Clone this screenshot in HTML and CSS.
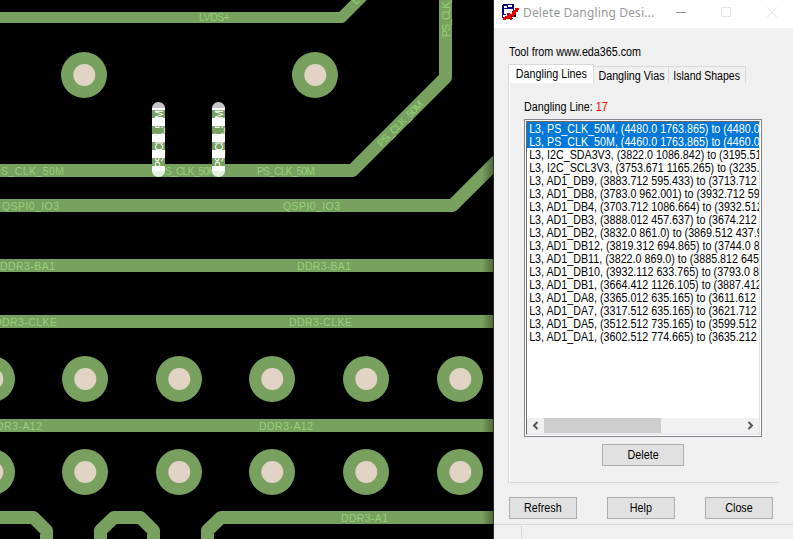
FILE: index.html
```html
<!DOCTYPE html>
<html lang="en">
<head>
<meta charset="utf-8">
<title>Delete Dangling Design</title>
<link rel="stylesheet" href="styles.css">
</head>
<body>
<main class="workspace">
<svg class="board" width="494" height="539" viewBox="0 0 494 539">
  <defs>
    <linearGradient id="shade"><stop offset="0" stop-color="#000" stop-opacity="0"/><stop offset="1" stop-color="#000" stop-opacity=".38"/></linearGradient>
    <g id="via"><circle r="23" fill="#78a15f"/><circle cx=".3" r="11" fill="#e1d4c5"/></g>
    <g id="dangling">
      <path d="M152 171V108h13v63z" fill="#fff"/>
      <path d="M152 108c0-3 3-6 6.500-6s6.500 3 6.500 6z" fill="#c8c6c8"/>
      <path d="M152 110h13v8h-13zM152 126h13v8h-13zM152 142h13v8h-13zM152 158h13v8h-13z" fill="#78a15f"/>
      <path d="M152 171h13c0 3-3 6-6.500 6s-6.500-3-6.500-6z" fill="#e4f0df"/>
      <text class="net lit" transform="translate(162.500 168) rotate(-90)" textLength="58">PS_CLK_50M</text>
    </g>
  </defs>
  <rect width="494" height="539"/>
  <g class="trace">
    <path class="thin" d="M-10 17.500H341.500L365 -6"/>
    <path d="M-10 170.500H352.500L445.500 77.500V-10"/>
    <path d="M-10 205.500H452.500L510 148"/>
    <path d="M-10 265.500H510M-10 321.500H510M-10 425.500H510"/>
    <path d="M-10 517.500H33.500L46.500 530.500V550M100.500 550V530.500L114 517.500H140.500L153.500 530.500V550M207.500 550V530.500L221 517.500H510"/>
  </g>
  <use href="#via" x="84" y="75"/><use href="#via" x="315" y="75"/>
  <use href="#via" x="-8" y="379"/><use href="#via" x="85" y="379"/><use href="#via" x="179" y="379"/><use href="#via" x="272" y="379"/><use href="#via" x="366" y="379"/><use href="#via" x="460" y="379"/>
  <use href="#via" x="-8" y="472"/><use href="#via" x="85" y="472"/><use href="#via" x="179" y="472"/><use href="#via" x="272" y="472"/><use href="#via" x="366" y="472"/><use href="#via" x="460" y="472"/>
  <text class="net" x="199" y="21" textLength="31">LVDS+</text>
  <text class="net" transform="translate(356 5) rotate(-45)">LVDS+</text>
  <text class="net" x="1" y="174.500" textLength="63">S_CLK_50M</text>
  <text class="net" x="165" y="174.500" textLength="52">S_CLK_50M</text>
  <text class="net" x="257" y="174.500" textLength="58">PS_CLK_50M</text>
  <text class="net" transform="translate(381.500 147.500) rotate(-45)" textLength="60">PS_CLK_50M</text>
  <text class="net" transform="translate(449.500 37) rotate(-90)" textLength="58">PS_CLK_50M</text>
  <text class="net" x="2" y="209.500" textLength="57">QSPI0_IO3</text>
  <text class="net" x="283" y="209.500" textLength="57">QSPI0_IO3</text>
  <text class="net" x="0" y="269.500" textLength="55">DDR3-BA1</text>
  <text class="net" x="297" y="269.500" textLength="54">DDR3-BA1</text>
  <text class="net" x="-6" y="325.500" textLength="63">DDR3-CLKE</text>
  <text class="net" x="289" y="325.500" textLength="63">DDR3-CLKE</text>
  <text class="net" x="-12" y="429.500" textLength="54">DDR3-A12</text>
  <text class="net" x="259" y="429.500" textLength="54">DDR3-A12</text>
  <text class="net" x="341" y="521.500" textLength="47">DDR3-A1</text>
  <use href="#dangling"/><use href="#dangling" x="60"/>
  <rect x="482" width="12" height="539" fill="url(#shade)"/>
  <rect x="493" width="1" height="539" fill="#302d30" opacity=".8"/>
</svg>

<section class="dialog">
  <header class="titlebar">
    <svg class="app-icon" width="17" height="17" viewBox="0 0 17 17" shape-rendering="crispEdges">
      <path fill="#000080" d="M1 0h11v9h-2V5H5v6H1v3H0V1h1z"/>
      <path fill="#fff" d="M2 2h3v2H2zM6 1h4v2H6zM2 5h9v6H2z"/>
      <path fill="#000" d="M2 15h2v1H2zM6 14h5v1H6zM12 11h2v2h-2zM10 7h1v2h-1z"/>
      <path fill="#000080" d="M11 1h1v5h-1zM1 4h5v1H1zM1 10h3v1H1z"/>
      <path fill="#e80000" d="M13 4h4v2h-1v2h-2v3h-2v2h-2v3H8v-2H7v1H4v1H1v-3h2v-1h2V9h3v1h2V8h1V6h2z"/>
    </svg>
    <h1 class="title">Delete Dangling Desi...</h1>
    <svg class="window-controls" width="112" height="28" viewBox="0 0 112 28" fill="none" shape-rendering="crispEdges">
      <path d="M1 12.500H11" stroke="#929292"/>
      <path d="M46.500 7.500h9v9h-9z" stroke="#e5e5e5"/>
      <path d="M92 7.500l10 10M102 7.500l-10 10" stroke="#e2e2e2" shape-rendering="auto"/>
    </svg>
  </header>
  <p class="credit"><span class="label">Tool from www.eda365.com</span></p>
  <nav class="tabs"><div class="tab active"><span class="label">Dangling Lines</span></div><div class="tab vias"><span class="label">Dangling Vias</span></div><div class="tab shapes"><span class="label">Island Shapes</span></div></nav>
  <div class="panel">
    <p class="count"><span class="label">Dangling Line: <span class="number">17</span></span></p>
    <div class="listbox"><div class="list-inner">
      <ul class="rows">
        <li class="selected">L3, PS_CLK_50M, (4480.0 1763.865) to (4480.0</li>
        <li class="selected">L3, PS_CLK_50M, (4460.0 1763.865) to (4460.0</li>
        <li>L3, I2C_SDA3V3, (3822.0 1086.842) to (3195.51</li>
        <li>L3, I2C_SCL3V3, (3753.671 1165.265) to (3235.</li>
        <li>L3, AD1_DB9, (3883.712 595.433) to (3713.712</li>
        <li>L3, AD1_DB8, (3783.0 962.001) to (3932.712 59</li>
        <li>L3, AD1_DB4, (3703.712 1086.664) to (3932.512</li>
        <li>L3, AD1_DB3, (3888.012 457.637) to (3674.212</li>
        <li>L3, AD1_DB2, (3832.0 861.0) to (3869.512 437.9</li>
        <li>L3, AD1_DB12, (3819.312 694.865) to (3744.0 8</li>
        <li>L3, AD1_DB11, (3822.0 869.0) to (3885.812 645</li>
        <li>L3, AD1_DB10, (3932.112 633.765) to (3793.0 8</li>
        <li>L3, AD1_DB1, (3664.412 1126.105) to (3887.412</li>
        <li>L3, AD1_DA8, (3365.012 635.165) to (3611.612</li>
        <li>L3, AD1_DA7, (3317.512 635.165) to (3621.712</li>
        <li>L3, AD1_DA5, (3512.512 735.165) to (3599.512</li>
        <li>L3, AD1_DA1, (3602.512 774.665) to (3635.212</li>
      </ul>
      <div class="scrollbar">
        <svg width="17" height="15" viewBox="0 0 17 15"><path d="M10.500 4L7 7.500l3.500 3.500" fill="none" stroke="#555" stroke-width="2"/></svg>
        <div class="thumb"></div>
        <svg width="17" height="15" viewBox="0 0 17 15"><path d="M6.500 4L10 7.500 6.500 11" fill="none" stroke="#555" stroke-width="2"/></svg>
      </div>
    </div></div>
    <button class="button delete"><span class="label">Delete</span></button>
  </div>
  <div class="actions"><button class="button"><span class="label">Refresh</span></button><button class="button"><span class="label">Help</span></button><button class="button"><span class="label">Close</span></button></div>
  <footer class="statusbar"><div class="grip"></div></footer>
</section>
</main>
</body>
</html>
```
FILE: styles.css
```css
* { box-sizing: border-box; }
body { margin: 0; overflow: hidden; }
h1, p, ul { margin: 0; padding: 0; font-weight: normal; }
.workspace { display: flex; width: 793px; height: 539px; }
.board { flex: none; display: block; }
.trace { fill: none; stroke: #78a15f; stroke-width: 13; stroke-linejoin: round; }
.trace .thin { stroke-width: 11; }
.net { font: 10.5px "Liberation Sans", sans-serif; fill: #96d079; }
.lit { fill: #fff; }
.dialog { width: 299px; flex: none; display: flex; flex-direction: column; background: #f0f0f0; color: #000; font: 12.5px/15px "Liberation Sans", sans-serif; white-space: nowrap; }
/* The dialog face is a condensed sans */
.label { display: inline-block; transform: scaleX(.86); }
.credit .label, .count .label { transform-origin: left; }
.titlebar { display: flex; height: 28px; background: #fff; padding-left: 8px; }
.app-icon { margin-top: 4px; flex: none; }
.title { width: 152px; margin-left: 4px; font: 12px/26px "Noto Sans", sans-serif; letter-spacing: .14px; color: #999; }
.window-controls { flex: none; overflow: visible; }
.credit { margin: 17px 0 0 15px; height: 19px; line-height: 15px; }
.tabs { display: flex; align-items: flex-end; height: 19px; margin-left: 14px; }
.tab { display: flex; justify-content: center; height: 17px; border: 1px solid #d9d9d9; border-width: 1px 1px 0 0; line-height: 19px; }
.active { width: 86px; height: 19px; border-left-width: 1px; background: #fff; line-height: 18px; }
.vias { width: 75px; }
.shapes { width: 77px; }
.shapes .label { transform: scaleX(.84); }
.panel { width: 271px; height: 400px; margin-left: 14px; border: solid #d9d9d9; border-width: 0 0 1px 1px; box-shadow: inset 1px 0 #fff; padding: 17px 0 0 15px; }
.count { height: 19px; }
.number { color: #f00; }
.listbox { width: 238px; height: 318px; border: 1px solid #828790; padding: 1px; background: #fff; }
.list-inner { height: 314px; border: 1px solid; border-color: #696969 #e3e3e3 #e3e3e3 #696969; display: flex; flex-direction: column; overflow: hidden; }
.rows { flex: 1; width: 272px; list-style: none; transform: scaleX(.857); transform-origin: left; }
.rows li { height: 13px; padding-left: 2.5px; line-height: 14px; }
.rows .selected { background: #0078d7; color: #fff; }
.scrollbar { display: flex; height: 16px; background: #f0f0f0; }
.thumb { width: 117px; height: 15px; background: #cdcdcd; margin-right: 81px; }
.button { display: flex; justify-content: center; align-items: center; width: 68px; height: 22px; padding: 0; border: 1px solid #adadad; background: #e1e1e1; color: #000; font: inherit; }
.delete { width: 82px; margin: 7px 0 0 78px; }
.actions { display: flex; gap: 30px; margin: 14px 0 0 15px; height: 27px; }
.statusbar { flex: 1; border-top: 1px solid #d7d7d7; padding-top: 1px; }
.grip { width: 28px; height: 13px; border-right: 1px solid #d7d7d7; }
```
